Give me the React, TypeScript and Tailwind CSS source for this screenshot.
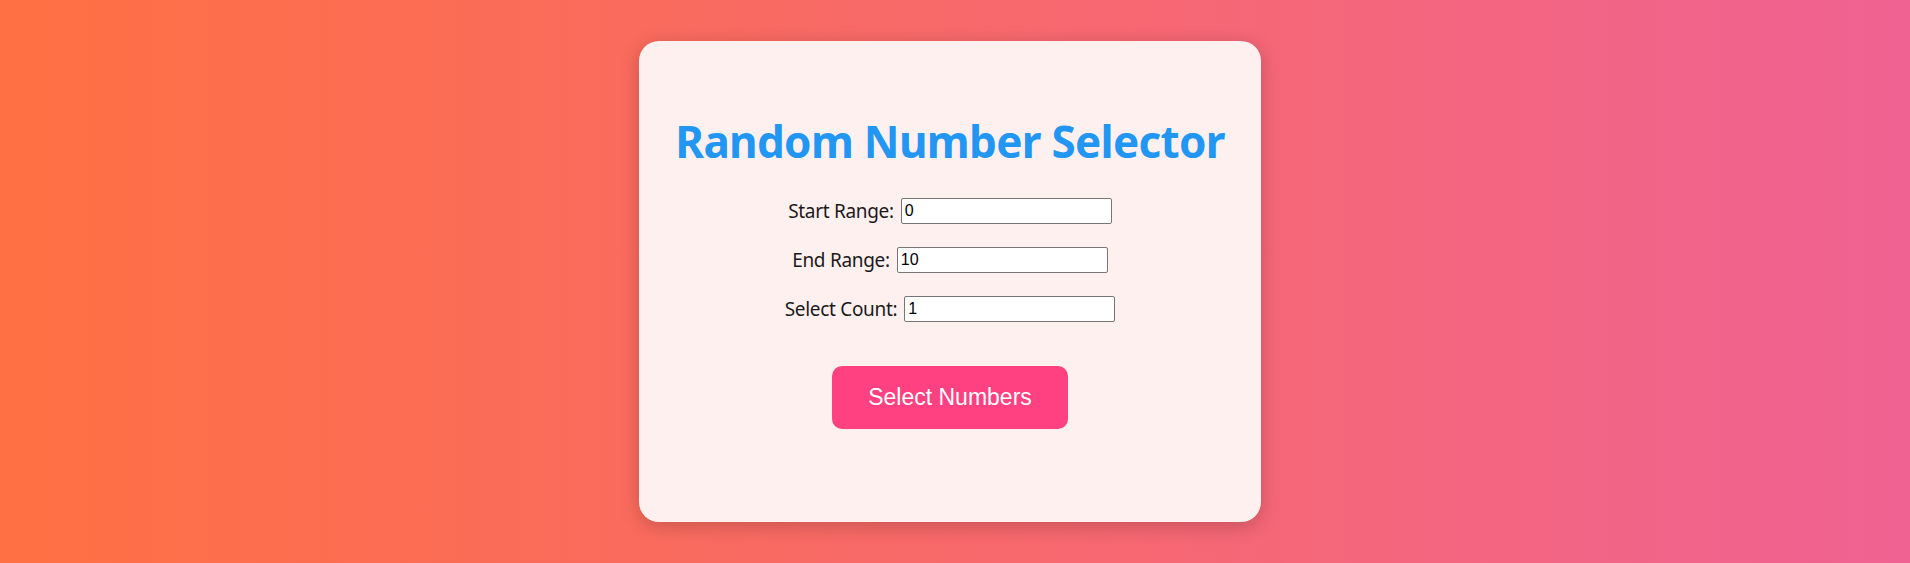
import React from "react";

export default function App() {
  const rows = [
    { label: "Start Range:", value: "0" },
    { label: "End Range:", value: "10" },
    { label: "Select Count:", value: "1" },
  ];
  return (
    <div className="h-[563px] w-full flex items-center justify-center pr-[10px] bg-[linear-gradient(to_right,#ff7043,#f06292)]">
      <div className="w-[622px] h-[481px] bg-[#fff0f0] rounded-[20px] shadow-[0_4px_20px_rgba(0,0,0,0.2)] flex flex-col items-center pt-[72px] [font-family:'Noto_Sans',sans-serif]">
        <h1 className="text-[44px] leading-[56px] font-bold text-[#2196f3] tracking-[-0.7px]">
          Random Number Selector
        </h1>
        <div className="mt-[29px] flex flex-col gap-[23px]">
          {rows.map((r) => (
            <div key={r.label} className="flex items-center justify-center gap-[7px] h-[26px]">
              <label className="text-[19px] text-[#1a1a1a] tracking-[-0.3px]">{r.label}</label>
              <input
                readOnly
                value={r.value}
                className="w-[211px] h-[26px] bg-white border border-[#767676] rounded-[2px] px-[3px] text-[16px] text-black [font-family:'Liberation_Sans',Arial,sans-serif] outline-none"
              />
            </div>
          ))}
        </div>
        <button className="mt-[44px] w-[236px] h-[63px] bg-[#ff4081] rounded-[10px] text-white text-[23px] [font-family:'Liberation_Sans',Arial,sans-serif]">
          Select Numbers
        </button>
      </div>
    </div>
  );
}
